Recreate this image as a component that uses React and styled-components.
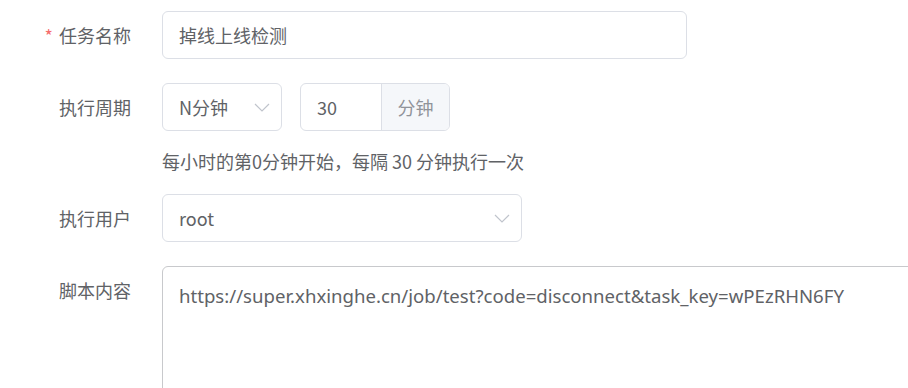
import React from "react";
import styled, { createGlobalStyle } from "styled-components";

const GlobalStyle = createGlobalStyle`
  body {
    margin: 0;
    background: #fff;
    font-family: "Noto Sans CJK SC", "Noto Sans", sans-serif;
    overflow: hidden;
  }
`;

const Form = styled.div`
  padding-top: 11px;
  overflow: hidden;
`;

const FormItem = styled.div`
  display: flex;
  align-items: flex-start;
  margin-bottom: ${({ $gap }) => $gap ?? 24}px;
`;

const Label = styled.label`
  flex: 0 0 162px;
  box-sizing: border-box;
  padding-right: 31px;
  text-align: right;
  font-size: 18px;
  line-height: 48px;
  color: #606266;
`;

const Star = styled.span`
  color: #f56c6c;
  margin-right: 6px;
`;

const Content = styled.div`
  display: flex;
  flex-direction: column;
  flex: 1;
  min-width: 0;
`;

const Row = styled.div`
  display: flex;
  gap: 18px;
`;

const Box = styled.div`
  box-sizing: border-box;
  width: ${({ $w }) => $w}px;
  height: 48px;
  border: 1px solid #dcdfe6;
  border-radius: 6px;
  display: flex;
  align-items: center;
  padding: 0 11px 0 16px;
  font-size: 18px;
  color: #606266;
  background: #fff;
`;

const Value = styled.span`
  flex: 1;
`;

const Group = styled.div`
  display: flex;
  box-sizing: border-box;
  width: 150px;
  height: 48px;
  border: 1px solid #dcdfe6;
  border-radius: 6px;
  overflow: hidden;
`;

const GroupInput = styled.div`
  flex: 1;
  display: flex;
  align-items: center;
  padding: 0 16px;
  font-size: 18px;
  color: #606266;
`;

const Addon = styled.div`
  width: 67px;
  border-left: 1px solid #dcdfe6;
  background: #f5f7fa;
  color: #909399;
  font-size: 18px;
  display: flex;
  align-items: center;
  justify-content: center;
`;

const Help = styled.div`
  margin-top: 18px;
  font-size: 18px;
  line-height: 24px;
  color: #606266;
`;

const TextArea = styled.div`
  box-sizing: border-box;
  width: 800px;
  height: 200px;
  border: 1px solid #c8c9cc;
  border-radius: 6px;
  padding: 15px 16px;
  font-family: "Noto Sans", "Open Sans", sans-serif;
  font-size: 18.6px;
  line-height: 28px;
  color: #606266;
`;

const Chevron = () => (
  <svg width="16" height="9" viewBox="0 0 16 9" fill="none">
    <path d="M1 1l7 7 7-7" stroke="#c0c4cc" strokeWidth="1.2" />
  </svg>
);

export default function App() {
  return (
    <>
      <GlobalStyle />
      <Form>
        <FormItem>
          <Label>
            <Star>*</Star>任务名称
          </Label>
          <Content>
            <Box $w={525}>
              <Value>掉线上线检测</Value>
            </Box>
          </Content>
        </FormItem>

        <FormItem $gap={21}>
          <Label>执行周期</Label>
          <Content>
            <Row>
              <Box $w={120}>
                <Value>N分钟</Value>
                <Chevron />
              </Box>
              <Group>
                <GroupInput>30</GroupInput>
                <Addon>分钟</Addon>
              </Group>
            </Row>
            <Help>每小时的第0分钟开始，每隔 30 分钟执行一次</Help>
          </Content>
        </FormItem>

        <FormItem>
          <Label>执行用户</Label>
          <Content>
            <Box $w={360}>
              <Value>root</Value>
              <Chevron />
            </Box>
          </Content>
        </FormItem>

        <FormItem>
          <Label>脚本内容</Label>
          <Content>
            <TextArea>
              https://super.xhxinghe.cn/job/test?code=disconnect&task_key=wPEzRHN6FY
            </TextArea>
          </Content>
        </FormItem>
      </Form>
    </>
  );
}
